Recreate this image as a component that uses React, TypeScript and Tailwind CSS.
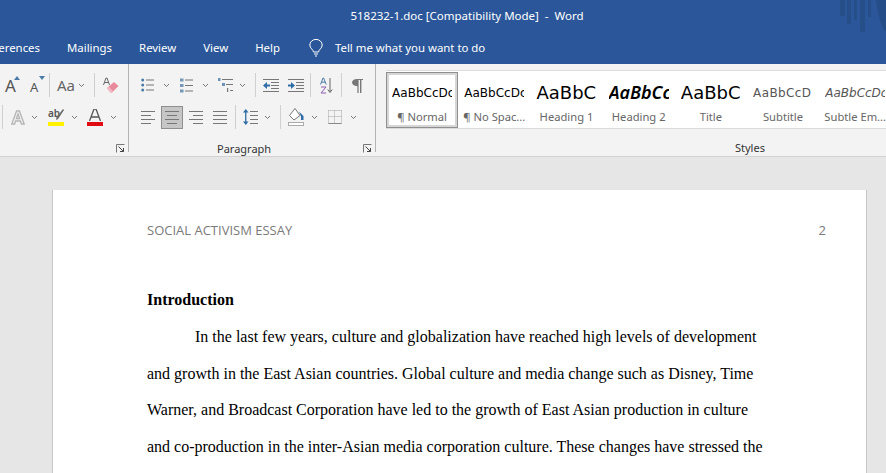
import React from "react";

const ui = "font-['Noto_Sans',sans-serif]";

const Chev = ({ className = "" }: { className?: string }) => (
  <svg width="7" height="5" viewBox="0 0 7 5" className={`shrink-0 ${className}`}>
    <path d="M1 1 3.5 3.5 6 1" fill="none" stroke="#777" strokeWidth="1" />
  </svg>
);

const Sep = ({ className = "" }: { className?: string }) => (
  <div className={`h-[24px] w-px shrink-0 bg-[#d0d0d0] ${className}`} />
);

const GroupLine = () => <div className="w-px h-[88px] shrink-0 bg-[#b3b3b3]" />;

const Launcher = () => (
  <svg width="9" height="9" viewBox="0 0 9 9" className="shrink-0">
    <path d="M.5 8.5V.5H8.5" fill="none" stroke="#777" />
    <path d="M2.5 2.5 7.5 7.5M7.5 4V7.5H4" fill="none" stroke="#444" />
  </svg>
);

const Lines = ({ w, rows, className = "" }: { w: number; rows: number[][]; className?: string }) => (
  <svg width={w} height="14" viewBox={`0 0 ${w} 14`} className={`shrink-0 ${className}`}>
    {rows.map(([x1, x2], i) => (
      <rect key={i} x={x1} y={1 + i * (12 / (rows.length - 1))} width={x2 - x1} height="1" fill="#777" />
    ))}
  </svg>
);

const Bullets = ({ className = "" }: { className?: string }) => (
  <svg width="13" height="14" viewBox="0 0 13 14" className={`shrink-0 ${className}`}>
    {[2, 7, 12].map((y) => (
      <g key={y}>
        <circle cx="1.7" cy={y} r="1.5" fill="#4a7ba7" />
        <rect x="5" y={y - 0.5} width="8" height="1" fill="#777" />
      </g>
    ))}
  </svg>
);

const Numbers = ({ className = "" }: { className?: string }) => (
  <svg width="13" height="15" viewBox="0 0 13 15" className={`shrink-0 ${className}`}>
    {[2, 7.5, 13].map((y) => (
      <g key={y}>
        <rect x="0" y={y - 1.5} width="3.5" height="3" fill="#4a7ba7" opacity=".75" />
        <rect x="5" y={y - 0.5} width="8" height="1" fill="#777" />
      </g>
    ))}
  </svg>
);

const Multilevel = ({ className = "" }: { className?: string }) => (
  <svg width="16" height="16" viewBox="0 0 16 16" className={`shrink-0 ${className}`}>
    <rect x="0" y="1" width="2.5" height="3" fill="#4a7ba7" opacity=".8" />
    <rect x="4" y="2" width="11" height="1" fill="#777" />
    <rect x="4" y="6" width="3" height="3" fill="#4a7ba7" opacity=".8" />
    <rect x="8" y="7" width="7" height="1" fill="#777" />
    <rect x="9" y="11" width="1.2" height="4" fill="#777" />
    <rect x="12" y="13" width="3" height="1" fill="#777" />
  </svg>
);

const Indent = ({ flip = false, className = "" }: { flip?: boolean; className?: string }) => (
  <svg width="17" height="14" viewBox="0 0 17 14" className={`shrink-0 ${className}`}>
    <rect x="1" y="1" width="16" height="1" fill="#777" />
    <rect x="9" y="4" width="8" height="1" fill="#777" />
    <rect x="9" y="7" width="8" height="1" fill="#777" />
    <rect x="9" y="10" width="8" height="1" fill="#777" />
    <rect x="1" y="13" width="16" height="1" fill="#777" />
    {flip ? (
      <path d="M1 6.5H4V4L8 7.5 4 11V8.5H1Z" fill="#2f6da8" />
    ) : (
      <path d="M8 6.5H5V4L1 7.5 5 11V8.5H8Z" fill="#2f6da8" />
    )}
  </svg>
);

const Sort = ({ className = "" }: { className?: string }) => (
  <svg width="13" height="17" viewBox="0 0 13 17" className={`shrink-0 ${className}`}>
    <path d="M.5 7.5 3 1H3.6L6.2 7.5M1.5 5.2H5.2" fill="none" stroke="#4a7ba7" />
    <path d="M1 10H6L1 16H6" fill="none" stroke="#8a5fb0" />
    <path d="M10 1V15M7.8 12.5 10 15.5 12.2 12.5" fill="none" stroke="#666" />
  </svg>
);

const Pilcrow = ({ className = "" }: { className?: string }) => (
  <svg width="11" height="15" viewBox="0 0 11 15" className={`shrink-0 ${className}`}>
    <path d="M5 1H11V2H9.4V15H8V2H6.6V15H5.4V8.2C2 8.2 0 6.5 0 4.6 0 2.6 2 1 5 1Z" fill="#777" />
  </svg>
);

const LineSpacing = ({ className = "" }: { className?: string }) => (
  <svg width="15" height="16" viewBox="0 0 15 16" className={`shrink-0 ${className}`}>
    <path d="M2.8 0 5.5 3.5H3.4V12.5H5.5L2.8 16 0 12.5H2.1V3.5H0Z" fill="#2f6da8" />
    {[2, 6, 10, 14].map((y) => (
      <rect key={y} x="7" y={y} width="8" height="1" fill="#777" />
    ))}
  </svg>
);

const Shading = ({ className = "" }: { className?: string }) => (
  <svg width="16" height="18" viewBox="0 0 16 18" className={`shrink-0 ${className}`}>
    <path d="M7 .5 1.5 7.5 6 12 12 7.5Z" fill="#fff" stroke="#777" />
    <path d="M11 3.5 15.5 8V12H13V8.5Z" fill="#2f6da8" />
    <rect x=".5" y="14.5" width="15" height="3" fill="#fff" stroke="#aaa" />
  </svg>
);

const Borders = ({ className = "" }: { className?: string }) => (
  <svg width="14" height="14" viewBox="0 0 14 14" className={`shrink-0 ${className}`}>
    <path d="M.5.5H13.5M.5 6.5H13.5M.5.5V13.5M6.5.5V13.5M13.5.5V13.5" fill="none" stroke="#a5a5a5" strokeDasharray="1 1" />
    <path d="M.5 13.5H13.5" fill="none" stroke="#888" />
  </svg>
);

const GrowA = ({ small = false, className = "" }: { small?: boolean; className?: string }) => (
  <div className={`relative shrink-0 w-[14px] h-[16px] ${className}`}>
    <span className={`absolute left-0 bottom-[-1px] leading-none text-[#555] ${small ? "text-[13px]" : "text-[17px]"} ${ui}`}>A</span>
    <svg width="6" height="4" viewBox="0 0 6 4" className="absolute right-[-1px] top-[-1px]">
      <path d={small ? "M0 0H6L3 4Z" : "M0 4H6L3 0Z"} fill="#4a7ba7" />
    </svg>
  </div>
);

const Eraser = ({ className = "" }: { className?: string }) => (
  <svg width="16" height="17" viewBox="0 0 16 17" className={`shrink-0 ${className}`}>
    <path d="M.5 8 3 1H4L6.5 8M1.5 5.5H5.5" fill="none" stroke="#666" />
    <path d="M4 11 11 5 15.5 9 9 15.5H7.5Z" fill="#e98a9c" />
    <path d="M4 11 7.5 15.5H9L10 14.4 6 9.4Z" fill="#f2b9c4" />
  </svg>
);

const OutlineA = ({ className = "" }: { className?: string }) => (
  <svg width="14" height="15" viewBox="0 0 14 15" className={`shrink-0 ${className}`}>
    <path d="M.8 14 5.6 1H8.4L13.2 14H10.4L9.4 11H4.6L3.6 14ZM5.4 8.6H8.6L7 4Z" fill="#f1f1f1" stroke="#b5b5b5" strokeWidth="1.3" />
  </svg>
);

const Highlight = ({ className = "" }: { className?: string }) => (
  <div className={`relative shrink-0 w-[16px] h-[17px] ${className}`}>
    <span className={`absolute left-0 top-[-3px] text-[10px] leading-[14px] font-semibold text-[#555] ${ui}`}>ab</span>
    <svg width="8" height="11" viewBox="0 0 8 11" className="absolute right-0 top-0">
      <path d="M7 0 8 1 2 10 0 11 .5 8.5Z" fill="#666" />
    </svg>
    <div className="absolute left-0 right-0 bottom-0 h-[4px] bg-[#fff200]" />
  </div>
);

const ColorA = ({ className = "" }: { className?: string }) => (
  <div className={`relative shrink-0 w-[16px] h-[17px] ${className}`}>
    <svg width="12" height="12" viewBox="0 0 12 12" className="absolute left-[2px] top-0">
      <path d="M.5 12 5 0H7L11.5 12M2.5 8H9.5" fill="none" stroke="#555" strokeWidth="1.3" />
    </svg>
    <div className="absolute left-0 right-0 bottom-0 h-[4px] bg-[#e00b12]" />
  </div>
);

const Bulb = () => (
  <svg width="14" height="18" viewBox="0 0 14 18" className="shrink-0">
    <path d="M4.5 13C4.3 10.5.8 9.4.8 6A6.2 5.6 0 0 1 13.2 6C13.2 9.4 9.7 10.5 9.5 13ZM5 15H9M6 17H8" fill="none" stroke="#fff" />
  </svg>
);

const StyleItem = ({ preview, label, previewClass, selected }: { preview: string; label: string; previewClass: string; selected?: boolean }) => (
  <div className={`w-[72.2px] shrink-0 h-[56px] flex flex-col items-center ${selected ? "bg-white shadow-[inset_0_0_0_1px_#8f8f8f,inset_0_0_0_3px_#d6d6d6]" : ""}`}>
    <div className={`mt-[5px] h-[32px] w-[60px] flex items-center overflow-hidden whitespace-nowrap ${previewClass}`}>
      {preview}
    </div>
    <div className={`text-[11.2px] leading-[16px] text-[#666] whitespace-nowrap ${ui}`}>{label}</div>
  </div>
);

const BODY = [
  "In the last few years, culture and globalization have reached high levels of development",
  "and growth in the East Asian countries. Global culture and media change such as Disney, Time",
  "Warner, and Broadcast Corporation have led to the growth of East Asian production in culture",
  "and co-production in the inter-Asian media corporation culture. These changes have stressed the",
];

const dejavu = "font-['DejaVu_Sans',sans-serif]";

export default function App() {
  return (
    <div className={`w-[886px] h-[473px] overflow-hidden flex flex-col bg-[#e6e6e6] ${ui}`}>
      {/* title bar */}
      <div className="relative h-[32px] shrink-0 bg-[#2b579a] flex items-center justify-center pl-[48px] text-white text-[11.5px] whitespace-pre">
        518232-1.doc [Compatibility Mode]  -  Word
        <svg width="76" height="34" viewBox="0 0 76 34" className="absolute right-0 top-0">
          <g fill="#24497f" opacity=".6">
            <rect x="30" y="0" width="5" height="16" />
            <rect x="37" y="0" width="4" height="24" />
            <rect x="44" y="0" width="3" height="20" />
            <rect x="50" y="0" width="5" height="32" />
            <rect x="58" y="0" width="3" height="17" />
          </g>
          <path d="M66 0H76V32C71 28 68 14 66 0Z" fill="#24497f" opacity=".7" />
        </svg>
      </div>

      {/* tabs */}
      <div className="h-[32px] shrink-0 bg-[#2b579a] flex items-center text-white text-[11.4px] whitespace-nowrap">
        <div className="w-[40px] shrink-0 flex justify-end overflow-hidden">
          <span>References</span>
        </div>
        <span className="ml-[27px]">Mailings</span>
        <span className="ml-[27px]">Review</span>
        <span className="ml-[27px]">View</span>
        <span className="ml-[27px]">Help</span>
        <div className="ml-[29px]"><Bulb /></div>
        <span className="ml-[12px]">Tell me what you want to do</span>
      </div>

      {/* ribbon */}
      <div className="h-[93px] shrink-0 bg-[#f3f3f3] border-b border-[#d2d2d2] flex">
        {/* font group */}
        <div className="w-[128px] shrink-0 pt-[5px] flex flex-col">
          <div className="h-[32px] flex items-center">
            <GrowA className="ml-[5px]" />
            <GrowA small className="ml-[11px]" />
            <Sep className="ml-[5px]" />
            <span className="ml-[7px] w-[16px] text-[15px] leading-none text-[#666]">Aa</span>
            <Chev className="ml-[5px]" />
            <Sep className="ml-[9px]" />
            <Eraser className="ml-[8px]" />
          </div>
          <div className="h-[32px] flex items-center">
            <Sep className="ml-[2px]" />
            <OutlineA className="ml-[8px]" />
            <Chev className="ml-[6px]" />
            <Highlight className="ml-[10px]" />
            <Chev className="ml-[7px]" />
            <ColorA className="ml-[9px]" />
            <Chev className="ml-[7px]" />
          </div>
          <div className="h-[16px] mt-[7px] flex items-center justify-end pr-[3px]">
            <Launcher />
          </div>
        </div>
        <GroupLine />

        {/* paragraph group */}
        <div className="w-[246px] shrink-0 pt-[5px] flex flex-col">
          <div className="h-[32px] flex items-center">
            <Bullets className="ml-[12px]" />
            <Chev className="ml-[9px]" />
            <Numbers className="ml-[10px]" />
            <Chev className="ml-[9px]" />
            <Multilevel className="ml-[9px]" />
            <Chev className="ml-[5px]" />
            <Sep className="ml-[9px]" />
            <Indent className="ml-[6px]" />
            <Indent flip className="ml-[8px]" />
            <Sep className="ml-[6px]" />
            <Sort className="ml-[9px]" />
            <Sep className="ml-[8px]" />
            <Pilcrow className="ml-[10px]" />
          </div>
          <div className="h-[32px] flex items-center">
            <Lines w={14} rows={[[0, 14], [0, 10], [0, 14], [0, 10]]} className="ml-[12px]" />
            <div className="ml-[6px] w-[22px] h-[23px] bg-[#c6c6c6] border border-[#8f8f8f] flex items-center justify-center shrink-0">
              <Lines w={14} rows={[[0, 14], [2, 12], [0, 14], [2, 12]]} />
            </div>
            <Lines w={14} rows={[[0, 14], [4, 14], [0, 14], [4, 14]]} className="ml-[6px]" />
            <Lines w={14} rows={[[0, 14], [0, 14], [0, 14], [0, 14]]} className="ml-[10px]" />
            <Sep className="ml-[8px]" />
            <LineSpacing className="ml-[7px]" />
            <Chev className="ml-[6px]" />
            <Sep className="ml-[9px]" />
            <Shading className="ml-[7px]" />
            <Chev className="ml-[7px]" />
            <Borders className="ml-[10px]" />
            <Chev className="ml-[8px]" />
          </div>
          <div className="h-[16px] mt-[7px] flex items-center">
            <span className="ml-[88px] text-[11px] leading-none text-[#333]">Paragraph</span>
            <div className="ml-auto mr-[3px]"><Launcher /></div>
          </div>
        </div>
        <GroupLine />

        {/* styles group */}
        <div className="flex-1 min-w-0 flex flex-col pt-[6px] overflow-hidden">
          <div className="ml-[10px] h-[60px] bg-white border-y border-[#dcdcdc] flex items-center">
            <StyleItem selected preview="AaBbCcDc" label="¶ Normal" previewClass={`text-[12px] text-black ${dejavu}`} />
            <StyleItem preview="AaBbCcDc" label="¶ No Spac..." previewClass={`text-[12px] text-black ${dejavu}`} />
            <StyleItem preview="AaBbC" label="Heading 1" previewClass={`text-[18px] text-black ${dejavu}`} />
            <StyleItem preview="AaBbCc" label="Heading 2" previewClass={`text-[18px] italic font-semibold text-black ${ui}`} />
            <StyleItem preview="AaBbC" label="Title" previewClass={`text-[18px] text-black ${dejavu}`} />
            <StyleItem preview="AaBbCcD" label="Subtitle" previewClass={`text-[12px] tracking-[0.4px] text-[#555] ${dejavu}`} />
            <StyleItem preview="AaBbCcDc" label="Subtle Em..." previewClass={`text-[12px] italic text-[#555] ${dejavu}`} />
          </div>
          <div className="h-[16px] mt-[11px] ml-[359px] text-[11px] leading-[16px] text-[#333]">
            Styles
          </div>
        </div>
      </div>

      {/* document */}
      <div className="flex-1 min-h-0 pt-[33px] pl-[52px] overflow-hidden">
        <div className="w-[815px] h-[400px] bg-white border-x border-[#c6c6c6] pl-[94px] pr-[40px] pt-[31px]">
          <div className="h-[20px] flex items-center justify-between text-[13px] text-[#7a7a7a] font-['Open_Sans',sans-serif]">
            <span>SOCIAL ACTIVISM ESSAY</span>
            <span>2</span>
          </div>
          <div className="mt-[41.4px] font-['Liberation_Serif',serif] text-[16px] leading-[36.67px] text-black whitespace-nowrap">
            <div className="font-bold">Introduction</div>
            {BODY.map((line, i) => (
              <div key={i} className={i === 0 ? "pl-[48px]" : ""}>{line}</div>
            ))}
          </div>
        </div>
      </div>
    </div>
  );
}
